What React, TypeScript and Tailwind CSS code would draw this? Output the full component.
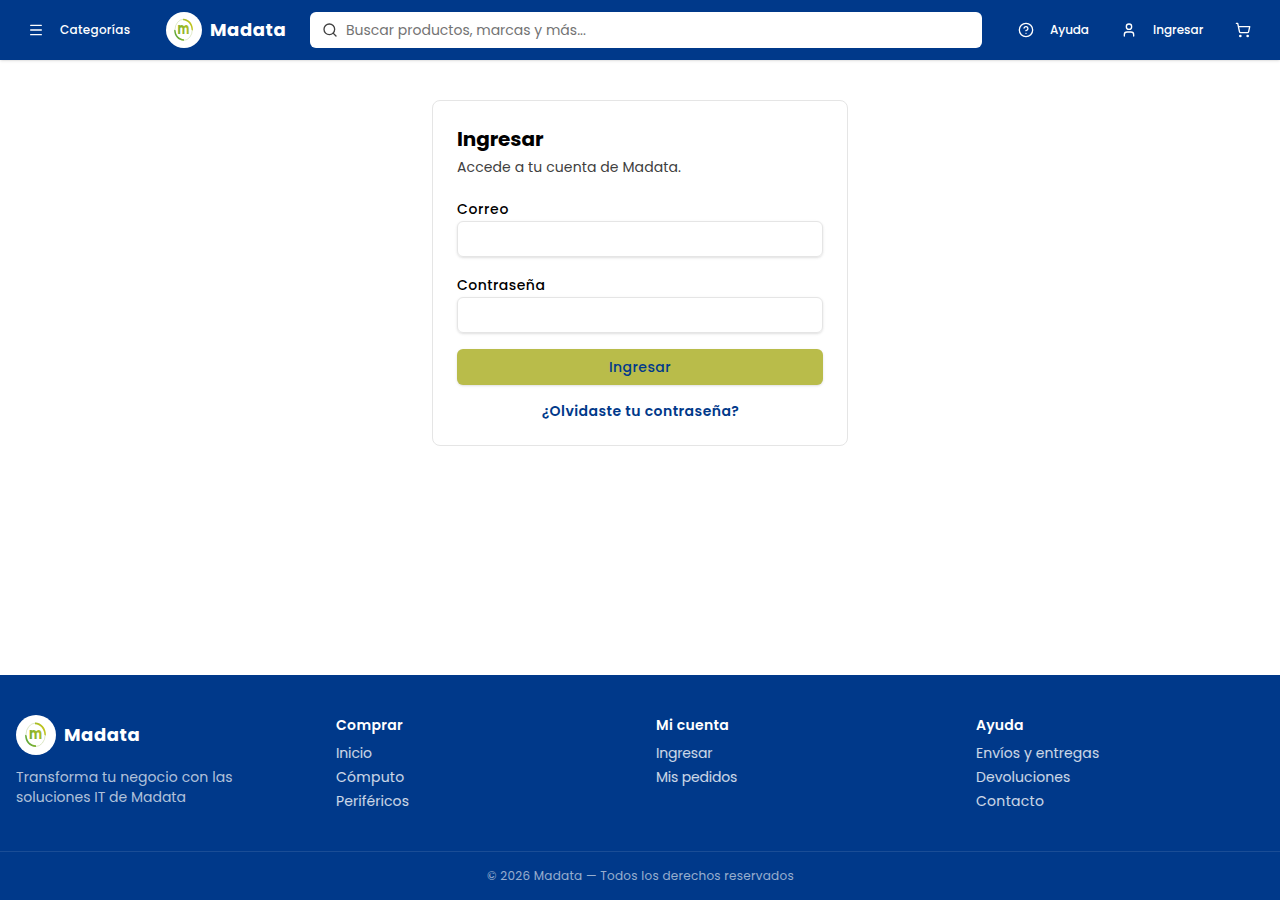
import { useId } from 'react'
import { CircleHelp, Menu, Search, ShoppingCart, User } from 'lucide-react'

const FOOTER_SECTIONS = [
  {
    title: 'Comprar',
    titleClass: 'tracking-[0.35px]',
    links: [
      { label: 'Inicio', className: 'tracking-[-0.15px]' },
      { label: 'Cómputo', className: 'tracking-[0.25px]' },
      { label: 'Periféricos', className: 'tracking-[0.08px]' },
    ],
  },
  {
    title: 'Mi cuenta',
    titleClass: 'tracking-[0.3px]',
    links: [
      { label: 'Ingresar', className: 'tracking-[-0.2px]' },
      { label: 'Mis pedidos', className: 'tracking-[-0.2px]' },
    ],
  },
  {
    title: 'Ayuda',
    titleClass: 'tracking-[0.17px]',
    links: [
      { label: 'Envíos y entregas', className: 'tracking-[0.08px]' },
      { label: 'Devoluciones', className: 'tracking-[0.05px]' },
      { label: 'Contacto', className: 'tracking-[0.3px]' },
    ],
  },
]

export default function App() {
  return (
    <div className="flex min-h-screen flex-col bg-white font-['Poppins','Inter',sans-serif] text-black">
      <Header />
      <main className="flex-1 px-4 py-10">
        <LoginCard />
      </main>
      <Footer />
    </div>
  )
}

function Logo({ className }: { className: string }) {
  const id = useId()

  return (
    <span className={`block shrink-0 rounded-full bg-white ${className}`}>
      <svg viewBox="0 0 40 40" className="size-full" fill="none">
        <defs>
          <linearGradient id={id} gradientUnits="userSpaceOnUse" x1="9" y1="24" x2="30" y2="16">
            <stop offset="0" stopColor="#5ea83a" />
            <stop offset="1" stopColor="#c6c51c" />
          </linearGradient>
        </defs>
        <ellipse cx="19.6" cy="19.8" rx="9.6" ry="11.7" stroke="#b9cf8c" strokeWidth="0.5" />
        <path d="M19 7.6C25.5 7.8 30.2 13 29.9 20.6L28.5 20C28.2 14.3 24.5 9.7 19 9.3Z" fill={`url(#${id})`} />
        <path d="M20 32C13.5 31.8 8.9 27 9.1 19.8L10.6 20.4C10.9 26 14.6 30 20 30.3Z" fill={`url(#${id})`} />
        <text
          x="12.9"
          y="24.4"
          fontSize="16.5"
          fontWeight="700"
          textLength="13.2"
          lengthAdjust="spacingAndGlyphs"
          fill={`url(#${id})`}
        >
          m
        </text>
      </svg>
    </span>
  )
}

function Header() {
  return (
    <header className="flex h-15 items-center gap-6 bg-[#00398a] px-4 text-xs font-medium text-white shadow-sm">
      <button className="flex h-9 items-center gap-4 px-3">
        <Menu size={16} />
        <span className="w-[70px] whitespace-nowrap text-left tracking-[0.3px]">Categorías</span>
      </button>
      <a href="#" className="flex items-center gap-2">
        <Logo className="size-9" />
        <span className="w-[76px] whitespace-nowrap text-lg font-bold tracking-[0.6px]">Madata</span>
      </a>
      <div className="flex h-9 flex-1 items-center gap-2 rounded-md bg-white px-3">
        <Search size={16} className="text-neutral-700" />
        <input
          className="flex-1 text-sm font-normal text-black outline-none placeholder:text-neutral-500"
          placeholder="Buscar productos, marcas y más..."
        />
      </div>
      <nav className="flex items-center gap-2">
        <a href="#" className="flex h-9 items-center gap-4 px-3">
          <CircleHelp size={16} />
          <span className="w-[39px] whitespace-nowrap tracking-[-0.1px]">Ayuda</span>
        </a>
        <a href="#" className="flex h-9 items-center gap-4 px-3">
          <User size={16} />
          <span className="w-[50px] whitespace-nowrap">Ingresar</span>
        </a>
        <a href="#" className="flex h-9 items-center pr-[13px] pl-3">
          <ShoppingCart size={16} />
        </a>
      </nav>
    </header>
  )
}

function LoginCard() {
  return (
    <div className="mx-auto max-w-[416px] rounded-lg border border-neutral-200 p-6">
      <h1 className="text-xl font-bold tracking-[-0.1px]">Ingresar</h1>
      <p className="mt-1 text-sm tracking-[0.1px] text-neutral-700">Accede a tu cuenta de Madata.</p>
      <form className="mt-5 space-y-4 text-sm font-medium">
        <label className="block leading-6 tracking-[0.65px]">
          Correo
          <input type="email" className="block h-9 w-full rounded-md border border-neutral-200 px-3 shadow-sm outline-none" />
        </label>
        <label className="block leading-6 tracking-[0.48px]">
          Contraseña
          <input type="password" className="block h-9 w-full rounded-md border border-neutral-200 px-3 shadow-sm outline-none" />
        </label>
        <button
          type="button"
          className="block h-9 w-full rounded-md bg-[#b9bc4a] tracking-[0.45px] text-[#00398a] shadow-sm"
        >
          Ingresar
        </button>
        <a href="#" className="block pl-px text-center font-semibold tracking-[0.45px] text-[#00398a]">
          ¿Olvidaste tu contraseña?
        </a>
      </form>
    </div>
  )
}

function Footer() {
  return (
    <footer className="bg-[#00398a] text-sm text-white">
      <div className="grid grid-cols-4 gap-8 px-4 py-10">
        <div>
          <div className="flex items-center gap-2">
            <Logo className="size-10" />
            <span className="text-lg font-bold tracking-[0.6px]">Madata</span>
          </div>
          <p className="mt-3 max-w-[240px] tracking-[0.1px] text-white/70">
            Transforma tu negocio con las{' '}
            <span className="tracking-normal">soluciones IT de Madata</span>
          </p>
        </div>
        {FOOTER_SECTIONS.map(section => (
          <div key={section.title}>
            <h2 className={`mb-2 font-semibold ${section.titleClass}`}>{section.title}</h2>
            <ul className="space-y-1 text-white/80">
              {section.links.map(link => (
                <li key={link.label}>
                  <a href="#" className={link.className}>{link.label}</a>
                </li>
              ))}
            </ul>
          </div>
        ))}
      </div>
      <div className="border-t border-white/10 py-4 pl-px text-center text-xs tracking-[0.26px] text-white/60">
        © 2026 Madata — Todos los derechos reservados
      </div>
    </footer>
  )
}
